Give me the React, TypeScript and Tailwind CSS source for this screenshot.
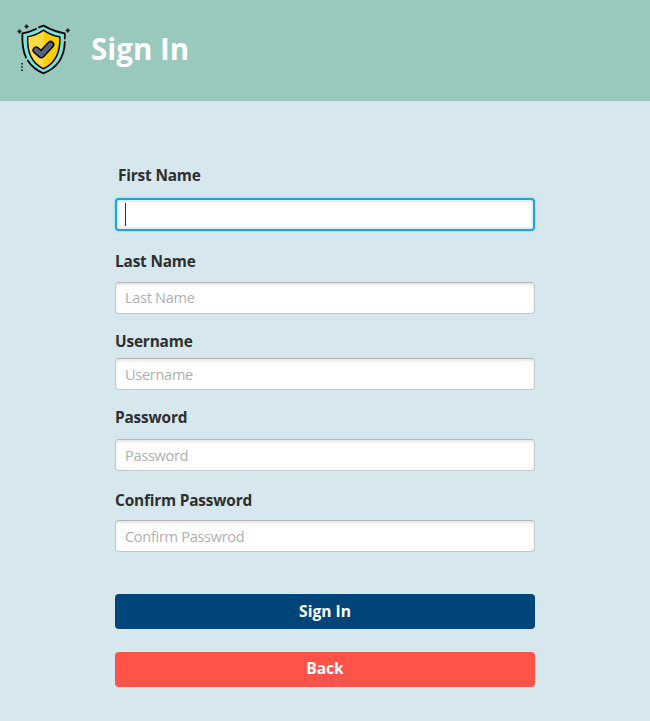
function ShieldLogo() {
  return (
    <svg width="54" height="52" viewBox="0 0 54 52" fill="none" className="shrink-0">
      <path d="M26.500 1.800C22 5 13 9 5.500 9.500C4.800 24 7.800 42 26.500 49.200C45.200 42 48.200 24 47.500 9.500C40 9 31 5 26.500 1.800Z" fill="#7fe0dc" />
      <path d="M26.500 6.200C22 9.500 16.500 12 10.700 12.800C10 27 14 39 26.500 44.800C39 39 43.500 27 42.800 12.800C36.500 12 31 9.500 26.500 6.200Z" fill="#ffcf00" />
      <path d="M26.500 6.200C22 9.500 16.500 12 10.700 12.800C10 27 14 39 26.500 44.800Z" fill="#ffda40" />
      <path d="M26.500 6.200C22 9.500 16.500 12 10.700 12.800C10 27 14 39 26.500 44.800C39 39 43.500 27 42.800 12.800C36.500 12 31 9.500 26.500 6.200Z" stroke="#090909" strokeWidth="1.500" strokeLinejoin="round" />
      <path d="M22 3.400L26.500 1.600C33 5.200 40 8.200 47.800 9.300V14.500M19 5C14.500 7.200 10 8.700 5.400 9.300C4.900 19 6 27 9 33.500M10.800 36.500C14.500 42.500 20 46.700 26.500 49.300C38.500 44.500 47.300 35 47.800 18" stroke="#090909" strokeWidth="1.800" strokeLinecap="round" strokeLinejoin="round" />
      <path d="M19.200 26.200L24.200 30.600L33.600 20.600" stroke="#090909" strokeWidth="7.600" strokeLinecap="round" strokeLinejoin="round" />
      <path d="M19.200 26.200L24.200 30.600L33.600 20.600" stroke="#56627e" strokeWidth="4.600" strokeLinecap="round" strokeLinejoin="round" />
      <path d="M2.500 5.500V9.500M.5 7.500H4.500M9.500 .5V4.500M7.500 2.500H11.500M50.700 4.500V8.500M48.700 6.500H52.700" stroke="#111" strokeWidth="1.700" />
      <path d="M5 39V40.500M5 42.300V43.800M5 45.600V47.100" stroke="#17201d" strokeWidth="1.700" />
    </svg>
  );
}

const label = "block h-5 whitespace-nowrap text-[15.4px] tracking-[-0.18px] font-bold leading-[22px] text-[#2f2f2f]";
const field =
  "block h-8 w-full rounded-[4px] border border-[#c5c7c8] border-t-[#b4b7b8] bg-white px-[9px] text-[14.6px] tracking-[-0.32px] text-[#777] outline-none shadow-[inset_0_2px_3px_rgba(0,0,0,0.10)] placeholder:text-[#b0b0b0] placeholder:opacity-100";
const button = "block w-full rounded-[4px] text-center text-[15.6px] font-bold text-white";

export default function App() {
  return (
    <div className="h-[721px] w-[650px] overflow-hidden bg-[#d6e7ed] font-['Open_Sans','Noto_Sans',sans-serif]">
      <header className="flex h-[101px] items-start bg-[#98c9bc] pl-[17px] pt-6">
        <ShieldLogo />
        <h1 className="ml-5 mt-[5px] whitespace-nowrap text-[29.5px] font-bold leading-10 text-white">Sign In</h1>
      </header>
      <form className="ml-[115px] flex w-[420px] flex-col pt-[64px]">
        <label className={label + " pl-[3px]"}>First Name</label>
        <div className="mt-[13px] flex h-[33px] items-center rounded-[4px] border-2 border-[#18a8dc] bg-white pl-[8px] shadow-[0_0_2px_#65c5e5,inset_0_0_0_2px_#e0f1f8]">
          <div className="h-[23px] w-px bg-[#333]" />
        </div>
        <label className={label + " mt-[20px]"}>Last Name</label>
        <input className={field + " mt-[11px] pb-[2px]"} placeholder="Last Name" />
        <label className={label + " mt-[17px]"}>Username</label>
        <input className={field + " mt-[7px]"} placeholder="Username" />
        <label className={label + " mt-[17px]"}>Password</label>
        <input type="text" className={field + " mt-[12px]"} placeholder="Password" />
        <label className={label + " mt-[19px]"}>Confirm Password</label>
        <input type="text" className={field + " mt-[10px]"} placeholder="Confirm Passwrod" />
        <button type="button" className={button + " mt-[42px] h-[35px] bg-[#00457a]"}>Sign In</button>
        <button type="button" className={button + " mt-[23px] h-[35px] bg-[#ff5349] pb-[2px]"}>Back</button>
      </form>
    </div>
  );
}
